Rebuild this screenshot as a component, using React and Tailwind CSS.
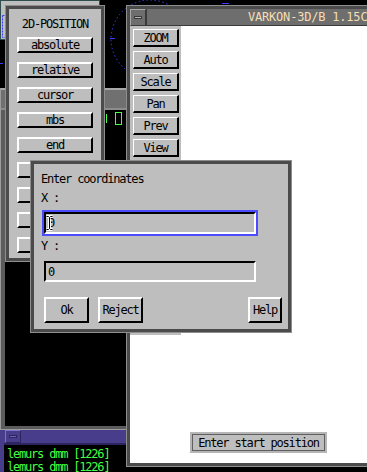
import React from 'react';

const raised =
  'bg-[#bebebe] border-2 border-t-white border-l-white border-r-black border-b-black';
const sunken =
  'bg-[#bebebe] border-2 border-t-black border-l-black border-r-white border-b-white';

// mwm style window frame: thin light outline + dark band
function Frame({ className = '', inner = '', children }) {
  return (
    <div className={`absolute border border-[#8e8e8e] ${className}`}>
      <div className={`h-full w-full border-[3px] border-[#4b4b4b] ${inner}`}>{children}</div>
    </div>
  );
}

function Button({ label, className = '' }) {
  return (
    <div className={`flex shrink-0 items-center justify-center ${raised} ${className}`}>
      {label}
    </div>
  );
}

const positionOptions = ['absolute', 'relative', 'cursor', 'mbs', 'end', '', '', '', ''];
const viewButtons = ['ZOOM', 'Auto', 'Scale', 'Pan', 'Prev', 'View'];

function Backdrop() {
  return (
    <svg className="absolute left-0 top-0" width="367" height="472" viewBox="0 0 367 472">
      <circle
        cx="150"
        cy="39"
        r="39"
        fill="none"
        stroke="#3c3cff"
        strokeWidth="1"
        strokeDasharray="1.5 2.5"
      />
      <line x1="110" y1="38.5" x2="115" y2="38.5" stroke="#3c3cff" />
      <line x1="0" y1="63.5" x2="3" y2="63.5" stroke="#3c3cff" />
      <line x1="222" y1="3.5" x2="229" y2="3.5" stroke="#3c3cff" />
    </svg>
  );
}

function IBeam() {
  const d = 'M1.5 1.5h2l1 1 1-1h2M4.5 2.5v11M1.5 14.5h2l1-1 1 1h2';
  return (
    <svg className="absolute left-[1px] top-[3px]" width="9" height="16" viewBox="0 0 9 16">
      <path d={d} fill="none" stroke="#fff" strokeWidth="3" />
      <path d={d} fill="none" stroke="#000" strokeWidth="1" />
    </svg>
  );
}

export default function App() {
  return (
    <div className="relative h-[472px] w-[367px] overflow-hidden bg-black font-['DejaVu_Sans_Mono',monospace] text-[12px] leading-none tracking-[-1.2px] text-black">
      <Backdrop />

      {/* window peeking out at the top left */}
      <div className="absolute left-0 top-0 h-[40px] w-[100px] border border-[#2f4f4f] bg-[#bebebe]">
        <svg className="absolute left-0 top-0" width="6" height="40">
          <rect
            x="1.5"
            y="14.5"
            width="3"
            height="22"
            fill="none"
            stroke="#3c3cff"
            strokeDasharray="2 1"
          />
        </svg>
      </div>

      {/* xterm behind everything */}
      <div className="absolute left-0 top-[88px] flex h-[342px] w-[127px] flex-col border-b border-l border-[#9c9c9c]">
        <div className="h-[22px] border-b-2 border-t-2 border-b-[#8c8c8c] border-t-[#a8a8a8] bg-[#707070]" />
        <div className="flex flex-1 items-start border-b-[3px] border-l-[4px] border-[#5c5c5c] bg-black">
          <div className="ml-[101px] mt-[4px] h-[9px] w-px bg-[#44ff44]" />
          <div className="ml-[8px] mt-[2px] h-[13px] w-[7px] border border-[#44ff44]" />
        </div>
      </div>

      {/* xterm with the purple title */}
      <div className="absolute left-0 top-[430px] flex h-[50px] w-[200px] flex-col border-l-[4px] border-[#483d8b]">
        <div className="flex h-[15px] items-center border-b-2 border-[#2c2560] bg-[#483d8b] pl-[1px]">
          <div className="flex h-[13px] w-[16px] items-center justify-center border border-b-[#2c2560] border-l-[#7b70cc] border-r-[#2c2560] border-t-[#7b70cc]">
            <div className="h-[3px] w-[8px] border border-[#2c2560] bg-[#6e64b8]" />
          </div>
        </div>
        <div className="flex-1 bg-black pl-[3px] pt-[3px] leading-[13px] text-[#44ff44]">
          <div>lemurs dmm [1226]</div>
          <div>lemurs dmm [1226]</div>
        </div>
      </div>

      {/* VARKON main window */}
      <Frame className="left-[126px] top-[5px] h-[462px] w-[260px]" inner="flex flex-col">
        <div className="flex h-[17px] shrink-0">
          <div className="flex w-[16px] items-center justify-center border border-b-[#3a3a3a] border-l-[#a8a8a8] border-r-[#3a3a3a] border-t-[#a8a8a8] bg-[#6e6e6e]">
            <div className="h-[3px] w-[8px] border border-[#3a3a3a] bg-[#b4b4b4]" />
          </div>
          <div className="flex flex-1 items-center border-b border-l border-[#3a3a3a] bg-[#6e6e6e] pl-[101px] tracking-[-0.2px] whitespace-nowrap text-[#f5deb3]">
            VARKON-3D/B 1.15C
          </div>
        </div>
        <div className="flex flex-1 flex-col bg-white">
          <div className="flex h-[309px] w-[51px] flex-col gap-[4px] bg-[#bebebe] pl-[3px] pt-[3px]">
            {viewButtons.map((b) => (
              <div
                key={b}
                className="flex h-[18px] w-[46px] items-center justify-center border-b-2 border-l border-r-2 border-t border-b-black border-l-white border-r-black border-t-white bg-[#bebebe]"
              >
                {b}
              </div>
            ))}
          </div>
          <div className="flex-1" />
          <div className="mb-[10px] ml-[60px] h-[21px] w-[137px] border-2 border-[#b6b6b6]">
            <div className="flex h-full items-center justify-center border border-[#5f5f5f] bg-[#bebebe] whitespace-nowrap">
              Enter start position
            </div>
          </div>
        </div>
      </Frame>

      {/* 2D-POSITION menu */}
      <Frame
        className="left-[5px] top-[5px] h-[257px] w-[100px]"
        inner="flex flex-col items-start bg-[#bebebe] pl-[8px]"
      >
        <div className="flex h-[28px] w-[76px] items-center justify-center pt-[2px]">2D-POSITION</div>
        <div className="flex flex-col gap-[9px]">
          {positionOptions.map((o, i) => (
            <Button key={i} label={o} className="h-[16px] w-[76px]" />
          ))}
        </div>
      </Frame>

      {/* Enter coordinates dialog */}
      <Frame
        className="left-[30px] top-[160px] h-[173px] w-[262px]"
        inner="flex flex-col items-start bg-[#bebebe] pl-[7px] pt-[9px]"
      >
        <div>Enter coordinates</div>
        <div className="mt-[7px] whitespace-pre">X :</div>
        <div className="relative ml-[1px] mt-[6px] h-[26px] w-[216px] border-2 border-[#4c4cff]">
          <div className={`flex h-full items-center pl-[2px] ${sunken}`}>0</div>
          <IBeam />
        </div>
        <div className="mt-[4px] whitespace-pre">Y :</div>
        <div className={`ml-[3px] mt-[9px] flex h-[21px] w-[212px] items-center pl-[2px] ${sunken}`}>0</div>
        <div className="ml-[3px] mt-[15px] flex w-[238px]">
          <Button label="Ok" className="h-[26px] w-[45px]" />
          <Button label="Reject" className="ml-[9px] h-[26px] w-[45px]" />
          <Button label="Help" className="ml-auto h-[26px] w-[34px]" />
        </div>
      </Frame>
    </div>
  );
}
